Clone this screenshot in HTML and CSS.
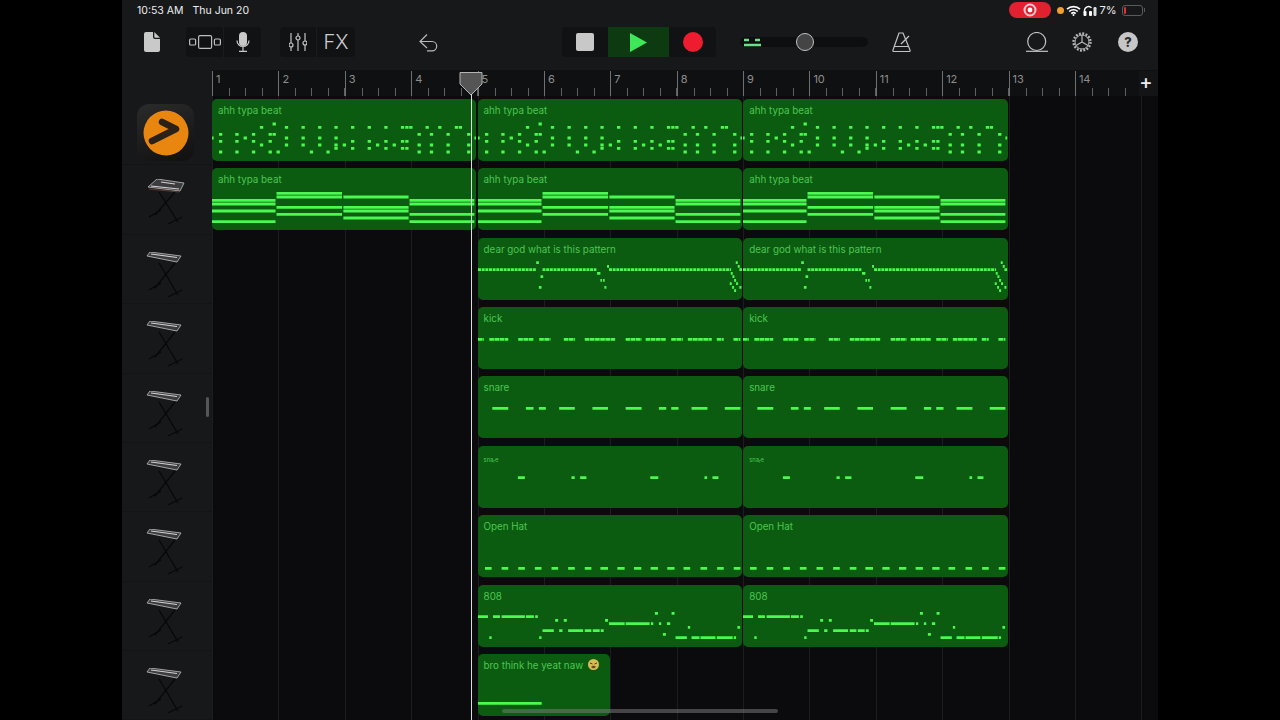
FILE: index.html
```html
<!DOCTYPE html>
<html lang="en">
<head>
<meta charset="utf-8">
<title>Arrangement</title>
<link rel="stylesheet" href="styles.css">
</head>
<body>
<svg class="defs" aria-hidden="true">
  <symbol id="p1" viewBox="24 12 795 186" preserveAspectRatio="none">
    <path d="M206 87h10M168 97h10M243 97h10M293 97h10M343 97h10M392 97h10M442 97h10M492 97h10M542 97h10M592 97h10M605 97h10M617 97h10M666 97h10M704 97h10M754 97h10M766 97h10
    M45 118h10M94 118h10M144 118h10M194 118h10M206 118h10M642 118h10M679 118h10M729 118h10M791 118h10
    M24 129h5M119 129h10M243 129h10M293 129h10M343 129h10M392 129h10M813 129h6
    M45 139h10M94 139h10M144 139h10M194 139h10M442 139h10M492 139h10M542 139h10M592 139h10M605 139h10
    M168 150h10M243 150h10M293 150h10M343 150h10M392 150h10M417 150h10M517 150h10M567 150h10M642 150h10M679 150h10M729 150h10M791 150h10
    M392 160h10M442 160h10M492 160h10M542 160h10M592 160h10M605 160h10
    M45 171h10M94 171h10M144 171h10M194 171h10M218 171h10M318 171h10M368 171h10M642 171h10M679 171h10M729 171h10M791 171h10"/>
  </symbol>
  <symbol id="p2" viewBox="24 219 795 186" preserveAspectRatio="none">
    <path d="M24 316H215M24 327H215M24 348H215M24 380H215M218 295H415M218 306H415M218 337H415M218 358H415M419 306H615M419 337H615M419 348H615M419 369H615M618 316H813M618 327H813M618 358H813M618 380H813"/>
  </symbol>
  <symbol id="p3" viewBox="24 9 795 186" preserveAspectRatio="none">
    <path class="fine" d="M24 104H200M218 104H380M418 104H785"/>
    <path d="M199 83h8M212 125h8M207 157h8M382 115h10M392 136h5M400 136h5M404 157h6M412 94h6M784 115h6M789 125h6M794 136h6M800 146h6M781 146h6M788 157h6M794 167h6M810 157h6M799 83h6M805 94h6M810 104h9"/>
  </symbol>
  <symbol id="p4" viewBox="24 216 795 186" preserveAspectRatio="none">
    <path class="split" d="M24 313H42M58 313H115M145 313H192M208 313H242M282 313H316M345 313H438M468 313H516M528 313H590M605 313H640M655 313H727M742 313H763M792 313H813"/>
  </symbol>
  <symbol id="p5" viewBox="24 3 795 186" preserveAspectRatio="none">
    <path d="M67 100H115M168 100H191M207 100H228M268 100H315M368 100H415M468 100H516M568 100H590M605 100H627M666 100H714M766 100H813"/>
  </symbol>
  <symbol id="p6" viewBox="24 213 795 186" preserveAspectRatio="none">
    <path d="M144 308H165M305 308H315M331 308H350M542 308H566M705 308H713M729 308H747"/>
  </symbol>
  <symbol id="p7" viewBox="24 15 795 186" preserveAspectRatio="none">
    <path d="M45 175H65M95 175H115M145 175H165M195 175H215M245 175H265M295 175H315M345 175H365M392 175H415M443 175H465M493 175H515M543 175H565M593 175H615M642 175H662M693 175H713M743 175H763M793 175H813"/>
  </symbol>
  <symbol id="p8" viewBox="24 225 795 186" preserveAspectRatio="none">
    <path d="M24 320H54M69 320H90M95 320H165M168 320H192M196 320H204M58 383H65M208 383H215M218 362H252M268 362H278M295 362H340M345 362H365M369 362H390M393 362H402M256 331H265M282 331H291M406 331H415M418 341H465M468 341H540M544 341H551M568 341H575M592 341H602M556 310H565M606 310H615M580 373H589M655 352H662M804 352H812M618 383H652M666 383H690M693 383H738M742 383H790M793 383H800"/>
  </symbol>
  <symbol id="p9" viewBox="24 432 396 186" preserveAspectRatio="none">
    <path d="M24 580H215"/>
  </symbol>
  <symbol id="kb" viewBox="0 0 40 46">
    <path class="kb-leg" d="M14 11 33 43M30 11 10 36M4 38 16 31M23 45 37 38"/>
    <path class="kb-top" d="M5 0 36 4 32 10 2 4Z"/>
    <path class="kb-key" d="M6 2 32 5.500"/>
  </symbol>
  <symbol id="kb2" viewBox="0 0 40 46">
    <path class="kb-leg" d="M14 13 33 43M30 13 10 36M4 38 16 31M23 45 37 38"/>
    <path class="kb-top" d="M12 0 39 4 35 12 3 8Z"/>
    <path class="kb-key" d="M6 7 34 10M16 3 30 5"/>
    <path class="kb-wood" d="M4 10 34 13"/>
  </symbol>
</svg>

<div class="app">
  <header class="header">
    <div class="status">
      <span class="time">10:53 AM</span>
      <span class="date">Thu Jun 20</span>
      <div class="status-right">
        <div class="rec-pill"><svg width="14" height="14" viewBox="0 0 14 14"><circle cx="7" cy="7" r="5.500" fill="none" stroke="#f6c9cd" stroke-width="2"/><circle cx="7" cy="7" r="2.400" fill="#fff"/></svg></div>
        <span class="dot"></span>
        <svg class="wifi" width="15" height="11" viewBox="0 0 15 11"><path d="M1 4.200a9.400 9.400 0 0 1 13 0M3.200 6.500a6.200 6.200 0 0 1 8.600 0M5.300 8.600a3.200 3.200 0 0 1 4.400 0" fill="none" stroke="#fff" stroke-width="1.700"/><circle cx="7.500" cy="10" r="1" fill="#fff"/></svg>
        <svg class="phones" width="14" height="11" viewBox="0 0 14 11"><path d="M1.500 8V5.500a4 4 0 0 1 7-2.600" fill="none" stroke="#fff" stroke-width="1.400"/><rect x="0.500" y="6" width="3" height="5" rx="1" fill="#fff"/><rect x="6" y="6" width="3" height="5" rx="1" fill="#fff"/><rect x="10.500" y="2" width="3" height="9" rx="1.200" fill="#ddd"/></svg>
        <span class="pct">7%</span>
        <div class="battery"><span class="battery-level"></span></div>
        <span class="battery-nub"></span>
      </div>
    </div>
    <div class="toolbar">
      <svg class="doc" width="16" height="20" viewBox="0 0 16 20"><path d="M2 0H9V5a2 2 0 0 0 2 2h5V18a2 2 0 0 1-2 2H2a2 2 0 0 1-2-2V2a2 2 0 0 1 2-2Z" fill="#c9c9c9"/><path d="M10.300 0 16 5.700H11.500a1.200 1.200 0 0 1-1.200-1.200Z" fill="#c9c9c9"/></svg>
      <div class="group group-a">
        <div class="cell cell-view">
          <svg width="32" height="14" viewBox="0 0 32 14"><g fill="none" stroke="#bdbdbd" stroke-width="1.200"><rect x="0.600" y="4" width="6" height="6" rx="1"/><rect x="9.600" y="0.600" width="13" height="12.800" rx="1.500"/><rect x="25.400" y="4" width="6" height="6" rx="1"/></g></svg>
        </div>
        <div class="cell cell-mic">
          <svg width="14" height="20" viewBox="0 0 14 20"><rect x="3" y="0" width="8" height="14" rx="4" fill="#c9c9c9"/><path d="M1 8.500a6 6 0 0 0 12 0M7 15V19M3 19.300H11" fill="none" stroke="#c9c9c9" stroke-width="1.200"/></svg>
        </div>
      </div>
      <div class="group group-b">
        <div class="cell cell-mix">
          <svg width="18" height="18" viewBox="0 0 18 18"><g fill="#111214" stroke="#c4c4c4" stroke-width="1.200"><path d="M2 0V18M9 0V18M16 0V18"/><circle cx="2" cy="12" r="2"/><circle cx="9" cy="5" r="2"/><circle cx="16" cy="10" r="2"/></g></svg>
        </div>
        <div class="cell cell-fx">FX</div>
      </div>
      <svg class="undo" width="20" height="20" viewBox="0 0 20 20"><path d="M8 2.500 1 9.500 8 16M1 9.500H13a4.700 4.700 0 0 1 0 9.400H8" fill="none" stroke="#b8b8b8" stroke-width="1.200"/></svg>
      <div class="group transport">
        <div class="cell t-stop"><span class="stop"></span></div>
        <div class="cell t-play"><svg width="17" height="19" viewBox="0 0 17 19"><path d="M0 0 17 9.500 0 19Z" fill="#3fe858"/></svg></div>
        <div class="cell t-rec"><span class="rec"></span></div>
      </div>
      <div class="master">
        <svg class="meter" width="17" height="9" viewBox="0 0 17 9"><path d="M0 2H5M11 2H16M0 7H17" stroke="#6fe08a" stroke-width="2.500"/></svg>
        <span class="knob"></span>
      </div>
      <svg class="metro" width="19" height="20" viewBox="0 0 19 20"><path d="M7 1H11L18 18a1 1 0 0 1-1 1.500H2A1 1 0 0 1 1 18ZM2.800 14.500H16" fill="none" stroke="#c4c4c4" stroke-width="1.200"/><path d="M9 12 17 4" stroke="#c4c4c4" stroke-width="1.300"/></svg>
      <svg class="loop" width="22" height="20" viewBox="0 0 22 20"><circle cx="10.700" cy="9.500" r="9" fill="none" stroke="#c4c4c4" stroke-width="1.200"/><path d="M0 19.300H22" fill="none" stroke="#c4c4c4" stroke-width="1.200"/></svg>
      <svg class="gear" width="20" height="20" viewBox="0 0 20 20"><g fill="none" stroke="#b8b8b8"><circle cx="10" cy="10" r="8.500" stroke-width="2.400" stroke-dasharray="1.900 1.440"/><circle cx="10" cy="10" r="7" stroke-width="1"/><path d="M10 10V3M10 10 4 13.500M10 10 16 13.500" stroke-width="1.200"/></g></svg>
      <div class="help">?</div>
    </div>
  </header>

  <div class="ruler-row">
    <div class="corner"></div>
    <div class="ruler">
      <div class="bar">1</div><div class="bar">2</div><div class="bar">3</div><div class="bar">4</div><div class="bar">5</div><div class="bar">6</div><div class="bar">7</div><div class="bar">8</div><div class="bar">9</div><div class="bar">10</div><div class="bar">11</div><div class="bar">12</div><div class="bar">13</div><div class="bar">14</div>
      <div class="plus">+</div>
    </div>
  </div>

  <main class="body-row">
    <aside class="tracklist">
      <div class="head"><div class="logo"><svg width="46" height="46" viewBox="0 0 46 46"><circle cx="23" cy="23" r="22.500" fill="#e8860f"/><path d="M9 31 33 19 19 12" fill="none" stroke="#2a2218" stroke-width="6.500" stroke-linecap="round" stroke-linejoin="round"/></svg></div></div>
      <div class="head head-kb head-kb2"><svg class="kbd" width="40" height="46"><use href="#kb2"/></svg></div>
      <div class="head head-kb"><svg class="kbd" width="40" height="46"><use href="#kb"/></svg></div>
      <div class="head head-kb"><svg class="kbd" width="40" height="46"><use href="#kb"/></svg></div>
      <div class="head head-kb"><svg class="kbd" width="40" height="46"><use href="#kb"/></svg></div>
      <div class="head head-kb"><svg class="kbd" width="40" height="46"><use href="#kb"/></svg></div>
      <div class="head head-kb"><svg class="kbd" width="40" height="46"><use href="#kb"/></svg></div>
      <div class="head head-kb"><svg class="kbd" width="40" height="46"><use href="#kb"/></svg></div>
      <div class="head head-kb"><svg class="kbd" width="40" height="46"><use href="#kb"/></svg></div>
      <span class="resize"></span>
    </aside>
    <section class="lanes">
      <div class="lane">
        <div class="region"><span class="label">ahh typa beat</span><svg class="notes"><use href="#p1"/></svg></div>
        <div class="region"><span class="label">ahh typa beat</span><svg class="notes"><use href="#p1"/></svg></div>
        <div class="region"><span class="label">ahh typa beat</span><svg class="notes"><use href="#p1"/></svg></div>
      </div>
      <div class="lane">
        <div class="region"><span class="label">ahh typa beat</span><svg class="notes"><use href="#p2"/></svg></div>
        <div class="region"><span class="label">ahh typa beat</span><svg class="notes"><use href="#p2"/></svg></div>
        <div class="region"><span class="label">ahh typa beat</span><svg class="notes"><use href="#p2"/></svg></div>
      </div>
      <div class="lane">
        <div class="region col2"><span class="label">dear god what is this pattern</span><svg class="notes"><use href="#p3"/></svg></div>
        <div class="region"><span class="label">dear god what is this pattern</span><svg class="notes"><use href="#p3"/></svg></div>
      </div>
      <div class="lane">
        <div class="region col2"><span class="label">kick</span><svg class="notes"><use href="#p4"/></svg></div>
        <div class="region"><span class="label">kick</span><svg class="notes"><use href="#p4"/></svg></div>
      </div>
      <div class="lane">
        <div class="region col2"><span class="label">snare</span><svg class="notes"><use href="#p5"/></svg></div>
        <div class="region"><span class="label">snare</span><svg class="notes"><use href="#p5"/></svg></div>
      </div>
      <div class="lane">
        <div class="region col2"><span class="label tiny">sna<span class="low">r</span>e</span><svg class="notes"><use href="#p6"/></svg></div>
        <div class="region"><span class="label tiny">sna<span class="low">r</span>e</span><svg class="notes"><use href="#p6"/></svg></div>
      </div>
      <div class="lane">
        <div class="region col2"><span class="label">Open Hat</span><svg class="notes"><use href="#p7"/></svg></div>
        <div class="region"><span class="label">Open Hat</span><svg class="notes"><use href="#p7"/></svg></div>
      </div>
      <div class="lane">
        <div class="region col2"><span class="label">808</span><svg class="notes"><use href="#p8"/></svg></div>
        <div class="region"><span class="label">808</span><svg class="notes"><use href="#p8"/></svg></div>
      </div>
      <div class="lane">
        <div class="region col2 short"><span class="label">bro think he yeat naw <svg class="emoji" width="11" height="11" viewBox="0 0 11 11"><circle cx="5.500" cy="5.500" r="5.500" fill="#d8bd55"/><path d="M2 4 4.500 5M9 4 6.500 5" stroke="#4a3a20" stroke-width="1"/><ellipse cx="5.500" cy="8" rx="2.200" ry="1.300" fill="#6a4a28"/></svg></span><svg class="notes"><use href="#p9"/></svg></div>
      </div>
    </section>
  </main>

  <svg class="playhead" width="24" height="24" viewBox="0 0 24 24"><path d="M1 .5H23V12L12 23 1 12Z" fill="#555" stroke="#b5b5b5" stroke-width="1"/></svg>
  <span class="playline"></span>
  <span class="scrollbar"></span>
</div>
</body>
</html>
```

FILE: styles.css
```css
* { box-sizing: border-box; }
html, body { margin: 0; height: 100%; background: #000; overflow: hidden; }
body { font-family: Inter, "Liberation Sans", sans-serif; color: #ddd; }
.defs { width: 0; height: 0; display: block; }

.app { position: relative; width: 1036px; height: 720px; margin-left: 122px; background: #17181a; overflow: hidden; display: flex; flex-direction: column; }

.header { height: 70px; display: flex; flex-direction: column; flex: none; }
.status { height: 20px; display: flex; align-items: center; padding: 0 13px 0 15px; font-size: 10.500px; color: #eee; }
.date { margin-left: 9px; }
.status-right { margin-left: auto; display: flex; align-items: center; }
.rec-pill { width: 42px; height: 16px; border-radius: 8px; background: #e1212f; display: flex; align-items: center; justify-content: center; }
.dot { width: 7px; height: 7px; border-radius: 50%; background: #f0a030; margin-left: 6px; }
.wifi { margin-left: 2px; }
.phones { margin-left: 2px; }
.pct { margin-left: 2px; font-size: 11px; color: #eee; }
.battery { width: 21px; height: 11px; margin-left: 5px; border: 1px solid #5a5a5a; border-radius: 3px; padding: 1px; display: flex; }
.battery-level { width: 2px; background: #e0303a; border-radius: 1px; }
.battery-nub { width: 1.500px; height: 4px; margin-left: 1px; background: #5a5a5a; }

.toolbar { flex: 1; display: flex; align-items: center; padding: 0 0 6px 22px; }
.group { height: 30px; background: #111214; border-radius: 4px; display: flex; }
.cell { display: flex; align-items: center; justify-content: center; height: 100%; }
.doc { flex: none; }
.group-a { margin-left: 26px; }
.cell-view { width: 38px; border-right: 1px solid #1b1c1e; }
.cell-mic { width: 37px; }
.group-b { margin-left: 19px; }
.cell-mix { width: 37px; border-right: 1px solid #1b1c1e; }
.cell-fx { width: 38px; font-size: 20px; font-weight: 300; color: #ccc; }
.undo { margin-left: 64px; flex: none; }
.transport { margin-left: 123px; }
.t-stop { width: 46px; }
.stop { width: 18px; height: 18px; background: #c8c8c8; border-radius: 2px; }
.t-play { width: 61px; background: #0e3a12; }
.t-rec { width: 47px; }
.rec { width: 20px; height: 20px; border-radius: 50%; background: #ee1c2e; }
.master { margin-left: 24px; width: 128px; height: 10px; border-radius: 5px; background: #0d0e10; display: flex; align-items: center; padding-left: 4px; }
.knob { width: 18px; height: 18px; border-radius: 50%; background: #444; border: 1.500px solid #c0c0c0; margin-left: 35px; flex: none; }
.metro { margin-left: 24px; flex: none; }
.loop { margin-left: 115px; flex: none; }
.gear { margin-left: 24px; flex: none; }
.help { margin-left: 26px; width: 20px; height: 20px; border-radius: 50%; background: #c6c6c6; color: #2a2a2c; font-size: 13px; font-weight: 800; display: flex; align-items: center; justify-content: center; }

.ruler-row { height: 26px; display: flex; flex: none; }
.corner { width: 90px; flex: none; }
.ruler { flex: 1; display: flex; background: #0e1011; padding-top: 1px; }
.bar { width: 66.380px; flex: none; border-left: 1px solid #6f7071; padding: 1px 0 0 3px; font-size: 11px; line-height: 14px; color: #8e8e8e; background: repeating-linear-gradient(90deg, transparent 0 15.600px, #5f6061 15.600px 16.600px) left bottom / 100% 8px no-repeat; }
.plus { flex: 1; margin-left: -2px; padding-bottom: 4px; display: flex; align-items: center; font-size: 20px; font-weight: 500; color: #eee; line-height: 1; background: #131416; }

.body-row { flex: 1; display: flex; min-height: 0; position: relative; }
.tracklist { width: 90px; flex: none; position: relative; display: flex; flex-direction: column; }
.head { height: 69.375px; flex: none; border-bottom: 1px solid #131416; }
.logo { margin: 8px 0 0 15px; width: 57px; height: 57px; border-radius: 12px; background: linear-gradient(160deg, #2b2b2c, #101011); display: flex; align-items: center; justify-content: center; }
.head-kb { padding: 17px 0 0 23px; }
.head-kb2 { padding-top: 14px; }
.kbd { display: block; }
.kb-leg { fill: none; stroke: #08080a; stroke-width: 1.300; }
.kb-top { fill: #3c3c3f; stroke: #b0b0b2; stroke-width: .9; }
.kb-key { fill: none; stroke: #d4d4d4; stroke-width: 1.100; }
.kb-wood { fill: none; stroke: #5c3a2c; stroke-width: 1.200; }
.resize { position: absolute; left: 84px; top: 301px; width: 3px; height: 20px; background: #55565a; border-radius: 1.500px; }

.lanes { flex: 1; display: flex; flex-direction: column; background: #0b0b0e repeating-linear-gradient(90deg, #1c1d20 0 1px, transparent 1px 66.380px); }
.lane { height: 69.375px; flex: none; padding-top: 2.900px; display: grid; grid-template-columns: repeat(3, 264.400px); column-gap: 1.200px; grid-auto-rows: 62px; }
.region { display: grid; position: relative; background: #0b5c10; border-radius: 5px; overflow: hidden; }
.col2 { grid-column-start: 2; }
.short { width: 132px; }
.label { grid-area: 1 / 1; padding: 5px 0 0 6px; font-size: 9.800px; line-height: 13px; color: #4cc652; white-space: nowrap; z-index: 1; }
.tiny { font-size: 5.800px; padding-top: 7px; }
.low { vertical-align: -1px; font-size: 4.500px; }
.emoji { vertical-align: -1px; margin-left: 2px; }
.notes { grid-area: 1 / 1; width: 100%; height: 100%; display: block; fill: none; stroke: #4af850; stroke-width: 8.500; }
.fine { stroke-dasharray: 9 2; }
.split { stroke-dasharray: 14 1.500; }

.playhead { position: absolute; left: 337px; top: 72px; }
.playline { position: absolute; left: 348.500px; top: 94px; bottom: 0; width: 1.500px; background: #dcdcdc; }
.scrollbar { position: absolute; left: 380px; top: 709px; width: 276px; height: 4px; border-radius: 2px; background: rgba(120,120,120,.55); }
```
